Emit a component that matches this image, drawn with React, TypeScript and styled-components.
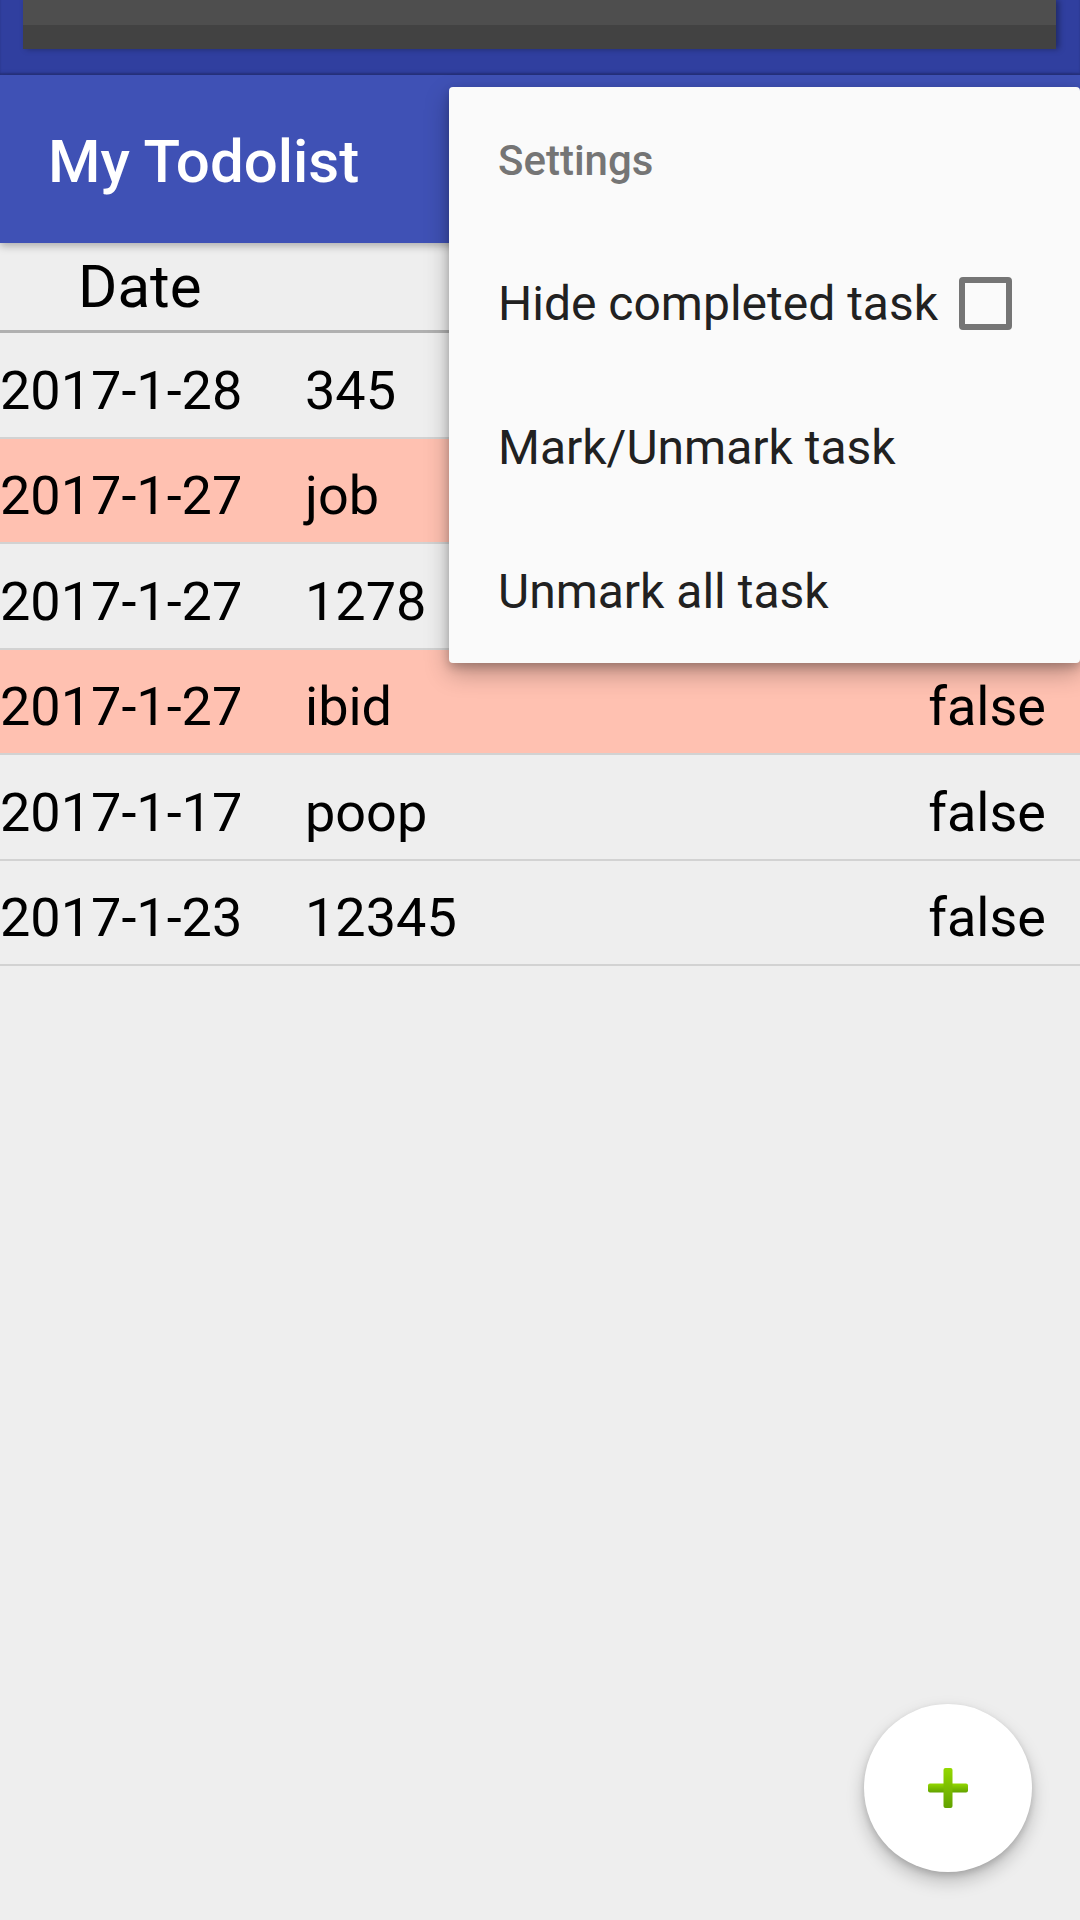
import React from "react";
import styled, { createGlobalStyle } from "styled-components";

const GlobalStyle = createGlobalStyle`
  html, body {
    margin: 0;
    padding: 0;
  }
  body {
    background: #eeeeee;
    font-family: Roboto, "Noto Sans", "Liberation Sans", sans-serif;
  }
  * {
    box-sizing: border-box;
  }
`;

const Screen = styled.div`
  position: relative;
  width: 1080px;
  height: 1920px;
  overflow: hidden;
  background: #eeeeee;
`;

const StatusBar = styled.div`
  height: 75px;
  padding: 0 24px 0 23px;
  background: #303f9f;
  box-shadow: inset 0 -2px 2px rgba(0, 0, 0, 0.2);
`;

const HeadsUp = styled.div`
  height: 49px;
  background: linear-gradient(#4e4e4e 0 25px, #424242 25px 100%);
  box-shadow: 3px 0 6px rgba(0, 0, 0, 0.35);
`;

const Toolbar = styled.header`
  position: relative;
  z-index: 2;
  height: 168px;
  display: flex;
  align-items: center;
  padding: 6px 0 0 48px;
  background: #3f51b5;
  box-shadow: 0 3px 8px rgba(0, 0, 0, 0.28);
`;

const Title = styled.h1`
  margin: 0;
  font-size: 60px;
  font-weight: 500;
  line-height: 1;
  color: #ffffff;
`;

const Table = styled.div`
  display: flex;
  flex-direction: column;
`;

const HeaderRow = styled.div`
  display: grid;
  grid-template-columns: 305px 1fr auto;
  align-items: center;
  height: 90px;
  border-bottom: 3px solid #b0b0b0;
  font-size: 60px;
  line-height: 1;
  color: #000;
`;

const HeaderCell = styled.div<{ $pad?: number }>`
  padding-left: ${(p) => p.$pad ?? 0}px;
`;

const Row = styled.div<{ $marked?: boolean }>`
  display: grid;
  grid-template-columns: 305px 1fr auto;
  align-items: center;
  height: 105.5px;
  padding-top: 12px;
  border-bottom: 2px solid #d2d2d2;
  background: ${(p) => (p.$marked ? "#ffc1b1" : "#eeeeee")};
  font-size: 54px;
  line-height: 1;
  color: #000;
`;

const Cell = styled.div``;

const StatusCell = styled.div`
  padding-right: 34px;
`;

const Menu = styled.div`
  position: absolute;
  z-index: 5;
  top: 87px;
  left: 449px;
  right: 0;
  background: #fafafa;
  border-radius: 4px;
  box-shadow: 0 10px 24px rgba(0, 0, 0, 0.28), 0 4px 10px rgba(0, 0, 0, 0.2);
`;

const MenuItem = styled.div<{ $header?: boolean }>`
  height: 144px;
  display: flex;
  align-items: center;
  padding-left: 49px;
  padding-top: ${(p) => (p.$header ? 4 : 1)}px;
  font-size: ${(p) => (p.$header ? 42 : 48)}px;
  font-weight: ${(p) => (p.$header ? 500 : 400)};
  line-height: 1;
  color: ${(p) => (p.$header ? "#757575" : "#212121")};
`;

const CheckBox = styled.span`
  display: inline-block;
  width: 53px;
  height: 53px;
  margin-left: 21px;
  border: 6px solid #757575;
  border-radius: 4px;
`;

const Fab = styled.button`
  position: absolute;
  right: 48px;
  bottom: 48px;
  width: 168px;
  height: 168px;
  padding: 0;
  border: none;
  border-radius: 50%;
  background: #ffffff;
  display: flex;
  align-items: center;
  justify-content: center;
  box-shadow: 0 9px 18px rgba(0, 0, 0, 0.22), 0 3px 6px rgba(0, 0, 0, 0.14);
`;

const PlusIcon = () => (
  <svg width="42" height="42" viewBox="0 0 42 42">
    <defs>
      <linearGradient id="plusGreen" x1="0" y1="0" x2="0" y2="1">
        <stop offset="0" stopColor="#93d800" />
        <stop offset="1" stopColor="#62a200" />
      </linearGradient>
    </defs>
    <rect x="1" y="16.5" width="40" height="9" rx="2" fill="url(#plusGreen)" />
    <rect x="16.5" y="1" width="9" height="40" rx="2" fill="url(#plusGreen)" />
  </svg>
);

const tasks = [
  { date: "2017-1-28", name: "345", marked: false },
  { date: "2017-1-27", name: "job", marked: true },
  { date: "2017-1-27", name: "1278", marked: false },
  { date: "2017-1-27", name: "ibid", marked: true },
  { date: "2017-1-17", name: "poop", marked: false },
  { date: "2017-1-23", name: "12345", marked: false },
];

const App = () => {
  return (
    <Screen>
      <GlobalStyle />
      <StatusBar>
        <HeadsUp />
      </StatusBar>
      <Toolbar>
        <Title>My Todolist</Title>
      </Toolbar>
      <Table>
        <HeaderRow>
          <HeaderCell $pad={78}>Date</HeaderCell>
          <HeaderCell />
          <HeaderCell />
        </HeaderRow>
        {tasks.map((t, i) => (
          <Row key={i} $marked={t.marked}>
            <Cell>{t.date}</Cell>
            <Cell>{t.name}</Cell>
            <StatusCell>false</StatusCell>
          </Row>
        ))}
      </Table>

      <Menu>
        <MenuItem $header>Settings</MenuItem>
        <MenuItem>
          Hide completed task
          <CheckBox />
        </MenuItem>
        <MenuItem>Mark/Unmark task</MenuItem>
        <MenuItem>Unmark all task</MenuItem>
      </Menu>

      <Fab>
        <PlusIcon />
      </Fab>
    </Screen>
  );
};

export default App;
